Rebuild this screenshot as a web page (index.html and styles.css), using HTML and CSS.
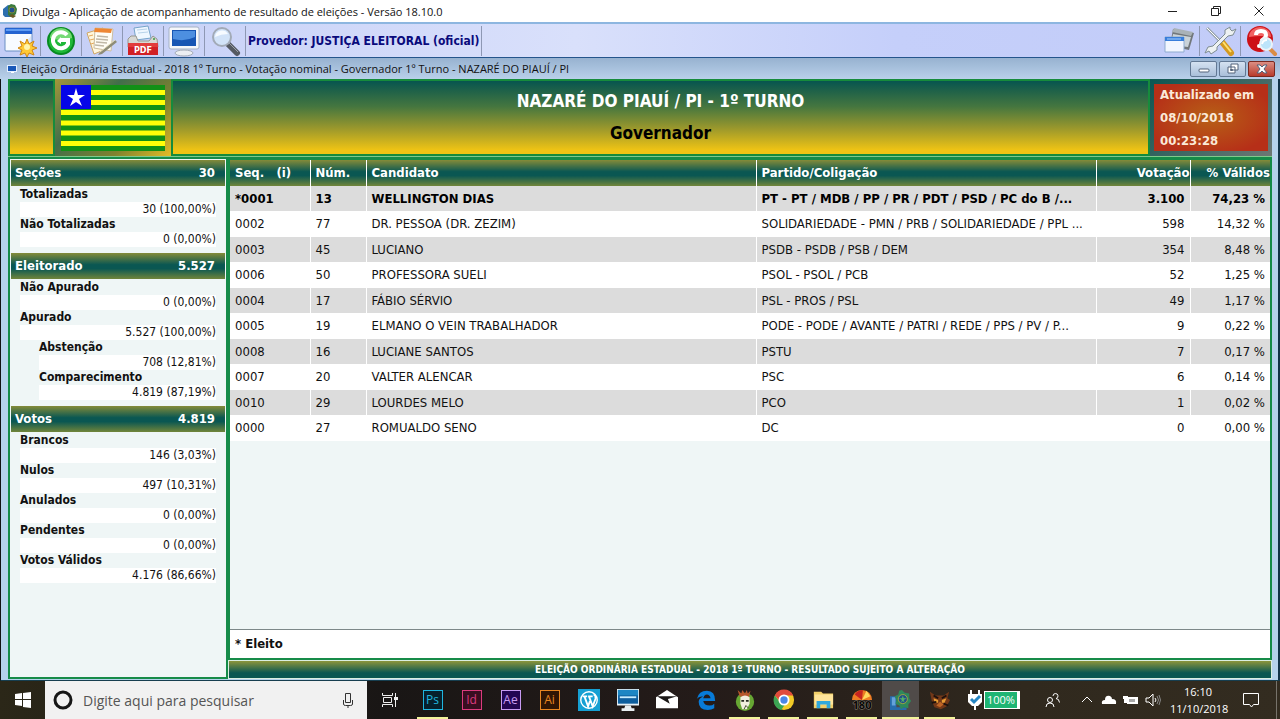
FILE: index.html
```
<!DOCTYPE html>
<html lang="pt-BR">
<head>
    <meta charset="UTF-8">
    <meta name="viewport" content="width=device-width, initial-scale=1.0">
    <title>Divulga - Aplicação de acompanhamento de resultado de eleições</title>
    <link rel="stylesheet" href="styles.css">
</head>
<body>
    <header class="titlebar">
        <svg class="app-icon" viewBox="0 0 16 16"><path d="M1 6l5-4 3 1v11H3L1 12z" fill="#2d6fae"/><path d="M6 3l3-2 4 1 2 4-1 5-4 3-4-2z" fill="#3a7a3e"/><circle cx="10" cy="7" r="3" fill="#23508e" stroke="#7d8a3a"/><path d="M7 13l3-2 4 2-3 2z" fill="#6a5a22"/></svg>
        <span>Divulga - Aplicação de acompanhamento de resultado de eleições - Versão 18.10.0</span>
        <div class="window-controls">
            <button aria-label="Minimizar"><svg viewBox="0 0 12 12"><path d="M1 6.500h9"/></svg></button>
            <button aria-label="Restaurar"><svg viewBox="0 0 12 12"><path d="M1.500 3.500h7v7h-7zM3.500 3.500v-2h7v7h-2"/></svg></button>
            <button aria-label="Fechar"><svg viewBox="0 0 12 12"><path d="M1.500 1.500l9 9M10.500 1.500l-9 9"/></svg></button>
        </div>
    </header>

    <nav class="toolbar">
        <button class="tool" aria-label="Nova janela">
            <svg viewBox="0 0 34 32"><rect x="2" y="3" width="27" height="23" rx="1" fill="#f8fbff" stroke="#6b8fc4"/><path d="M2 3h27v6H2z" fill="#2463d0"/><path d="M3 4h25v2H3z" fill="#5e9bf2"/><path d="M16 25l12-14v14z" fill="#dce7f6"/><path d="M24 14l2 5 5-3-2 5 5 2-5 2 2 5-5-2-2 4-2-4-5 2 2-5-4-2 4-2-2-5 5 3z" fill="#ffc935" stroke="#d08714"/><circle cx="24" cy="22" r="3" fill="#fff5ad"/></svg>
        </button>
        <button class="tool" aria-label="Atualizar">
            <svg viewBox="0 0 34 32"><circle cx="17" cy="16" r="14" fill="#078b20"/><circle cx="17" cy="16" r="12" fill="#1fb838"/><path d="M6 13a11 10 0 0 1 22 0q-10 4-22 0" fill="#75da75"/><path d="M23 10a8 8 0 1 0 1 9v-4h-7" fill="none" stroke="#fff" stroke-width="4"/><path d="M17 12v7l-4-3z" fill="#fff"/></svg>
        </button>
        <button class="tool" aria-label="Relatórios">
            <svg viewBox="0 0 34 32"><path d="M2 8l16-5 6 20-15 6z" fill="#fff7dd" stroke="#d0a765"/><path d="M10 3l18 1-2 22-17-3z" fill="#fffdf5" stroke="#ccbda0"/><path d="M10 3l17 1-1 4-17-1z" fill="#ee8734"/><path d="M12 11l11 1M11 14l12 1M11 17l11 1M10 20l9 1" stroke="#c0b8a7" stroke-width="1.500"/><path d="M4 11l4-1M5 15l4-1M6 19l3-1" stroke="#e5a85b"/><path d="M30 15l2 2-15 12-4 1 2-3z" fill="#8e8c77"/><path d="M30 15l-15 12" stroke="#e7dfbd"/></svg>
        </button>
        <button class="tool" aria-label="Gerar PDF">
            <svg viewBox="0 0 34 32"><path d="M8 3l14-2 3 12-15 2z" fill="#eff7ff" stroke="#76a4ca"/><path d="M11 5l10-1M12 8l10-1" stroke="#b8d3ea"/><path d="M5 11h5l2 5h11l4-5 4 3 1 8H2v-8z" fill="#d8d8d4" stroke="#98988f"/><circle cx="28" cy="14" r="1" fill="#389b43"/><path d="M2 18h30v12H2z" fill="#d12025"/><path d="M2 18h30v4H2z" fill="#e23c3c"/><text x="17" y="28" text-anchor="middle" class="pdf-text">PDF</text></svg>
        </button>
        <button class="tool" aria-label="Telão">
            <svg viewBox="0 0 34 32"><path d="M13 23h8l3 5H10z" fill="#d6dce5"/><ellipse cx="17" cy="28" rx="9" ry="3" fill="#eceff3" stroke="#a5adb8"/><rect x="2" y="2" width="30" height="22" rx="2" fill="#f5f7fa" stroke="#a5b2c5"/><path d="M5 5h24v16H5z" fill="#1756b3"/><path d="M6 6h22v6q-10 5-22 2z" fill="#4d8fe0"/></svg>
        </button>
        <button class="tool" aria-label="Pesquisar">
            <svg viewBox="0 0 34 32"><path d="M20 19l9 9" stroke="#555a62" stroke-width="6" stroke-linecap="round"/><path d="M21 18l9 9" stroke="#9ba0a8"/><circle cx="14" cy="12" r="9" fill="#d2e3f8" stroke="#a2aab7" stroke-width="2"/><path d="M7 12a7 7 0 0 1 13-3q-7 0-13 3" fill="#f7fbff"/></svg>
        </button>
        <span class="provider">Provedor: JUSTIÇA ELEITORAL (oficial)</span>
        <div class="toolbar-end">
            <button class="tool" aria-label="Janelas">
                <svg viewBox="0 0 34 32"><path d="M11 4l21 4-5 17-19-4z" fill="#71777b"/><path d="M12 3l19 4-2 4-19-4z" fill="#a9b2b7"/><path d="M11 9l18 3-3 10-17-2z" fill="#cad3d8"/><path d="M3 12h19v15H3z" fill="#f1f6ff" stroke="#8eabcf"/><path d="M3 12h19v4H3z" fill="#387edb"/><path d="M5 14h14" stroke="#a8d1ff"/></svg>
            </button>
            <button class="tool" aria-label="Configurações">
                <svg viewBox="0 0 34 32"><path d="M4 3l14 14" stroke="#98a4ac" stroke-width="3"/><path d="M4 3l14 14" stroke="#fff"/><path d="M19 17l9 11" stroke="#d49920" stroke-width="6" stroke-linecap="round"/><path d="M20 17l8 10" stroke="#ffe16e" stroke-width="2"/><path d="M27 2l-5 3v4L10 21l-5 1-3 6 4-2 2 3 6-4v-3l11-11 5-1 3-6-4 2-2-2z" fill="#edf1f2" stroke="#7e8c91"/></svg>
            </button>
            <button class="tool" aria-label="Ajuda">
                <svg viewBox="0 0 34 32"><circle cx="16" cy="14" r="13" fill="#cd1016"/><path d="M5 12a11 10 0 0 1 22 0q-10-2-22 0" fill="#f16262"/><path d="M12 10q0-4 5-4t5 4q0 3-5 6" fill="none" stroke="#fff" stroke-width="4"/><circle cx="15" cy="21" r="2" fill="#fff"/><path d="M26 24l5 5" stroke="#da8c45" stroke-width="4" stroke-linecap="round"/><circle cx="22" cy="19" r="6" fill="#bce4fa" stroke="#e9f3f9" stroke-width="2"/><path d="M18 19q1-4 5-4" fill="none" stroke="#fff" stroke-width="2"/></svg>
            </button>
        </div>
    </nav>

    <div class="child-title">
        <svg class="child-icon" viewBox="0 0 10 10"><path d="M0 1h10v7H0z" fill="#e4efff"/><path d="M1 2h8v5H1z" fill="#1958b8"/><path d="M4 8h3v1H4z" fill="#fff"/></svg>
        <span>Eleição Ordinária Estadual - 2018 1º Turno - Votação nominal - Governador 1º Turno - NAZARÉ DO PIAUÍ / PI</span>
        <div class="child-controls">
            <button aria-label="Minimizar consulta"><svg viewBox="0 0 14 12"><rect x="2" y="6" width="10" height="3" rx="1"/></svg></button>
            <button aria-label="Restaurar consulta"><svg viewBox="0 0 14 12"><path d="M5 1h7v6H5zM2 4h7v6H2zM4.500 6.500h2v1h-2z"/></svg></button>
            <button class="child-close" aria-label="Fechar consulta"><svg viewBox="0 0 14 12"><path d="M2 2h3l2 2 2-2h3L9 6l3 4H9L7 8l-2 2H2l3-4z"/></svg></button>
        </div>
    </div>

    <main class="desktop">
        <section class="banner">
            <div class="banner-block"></div>
            <div class="flag-frame">
                <svg class="flag" viewBox="0 0 104 66" preserveAspectRatio="none" role="img" aria-label="Bandeira do Piauí">
                    <path d="M0 0h104v66H0z" fill="#129016"/>
                    <path d="M0 7.500h104M0 17.500h104M0 27.500h104M0 38h104M0 48h104M0 58.500h104" stroke="#ffff08" stroke-width="5"/>
                    <path d="M0 0h30v24H0z" fill="#0505e8"/>
                    <path d="M15 3l2 7h7l-6 4 3 7-6-4-6 4 3-7-6-4h7z" fill="#fff"/>
                </svg>
            </div>
            <div class="banner-title">
                <h1>NAZARÉ DO PIAUÍ / PI - 1º TURNO</h1>
                <h2>Governador</h2>
            </div>
            <div class="updated">
                <div class="updated-box">
                    <div>Atualizado em</div>
                    <div>08/10/2018</div>
                    <div>00:23:28</div>
                </div>
            </div>
        </section>

        <div class="content">
            <aside class="sidebar">
                <section class="group">
                    <h3><span>Seções</span><span>30</span></h3>
                    <dl>
                        <dt>Totalizadas</dt><dd>30 (100,00%)</dd>
                        <dt>Não Totalizadas</dt><dd>0 (0,00%)</dd>
                    </dl>
                </section>
                <section class="group">
                    <h3><span>Eleitorado</span><span>5.527</span></h3>
                    <dl>
                        <dt>Não Apurado</dt><dd>0 (0,00%)</dd>
                        <dt>Apurado</dt><dd>5.527 (100,00%)</dd>
                        <dt class="sub">Abstenção</dt><dd class="sub">708 (12,81%)</dd>
                        <dt class="sub">Comparecimento</dt><dd class="sub">4.819 (87,19%)</dd>
                    </dl>
                </section>
                <section class="group">
                    <h3><span>Votos</span><span>4.819</span></h3>
                    <dl>
                        <dt>Brancos</dt><dd>146 (3,03%)</dd>
                        <dt>Nulos</dt><dd>497 (10,31%)</dd>
                        <dt>Anulados</dt><dd>0 (0,00%)</dd>
                        <dt>Pendentes</dt><dd>0 (0,00%)</dd>
                        <dt>Votos Válidos</dt><dd>4.176 (86,66%)</dd>
                    </dl>
                </section>
            </aside>

            <section class="results">
                <div class="results-panel">
                    <table>
                        <colgroup>
                            <col class="col-seq"><col class="col-num"><col><col class="col-party"><col class="col-votes"><col class="col-valid">
                        </colgroup>
                        <thead>
                            <tr><th>Seq. &nbsp; (i)</th><th>Núm.</th><th>Candidato</th><th>Partido/Coligação</th><th class="right">Votação</th><th class="right">% Válidos</th></tr>
                        </thead>
                        <tbody>
                            <tr class="elected"><td>*0001</td><td>13</td><td>WELLINGTON DIAS</td><td>PT - PT / MDB / PP / PR / PDT / PSD / PC do B /...</td><td class="right">3.100</td><td class="right">74,23 %</td></tr>
                            <tr><td>0002</td><td>77</td><td>DR. PESSOA (DR. ZEZIM)</td><td>SOLIDARIEDADE - PMN / PRB / SOLIDARIEDADE / PPL ...</td><td class="right">598</td><td class="right">14,32 %</td></tr>
                            <tr><td>0003</td><td>45</td><td>LUCIANO</td><td>PSDB - PSDB / PSB / DEM</td><td class="right">354</td><td class="right">8,48 %</td></tr>
                            <tr><td>0006</td><td>50</td><td>PROFESSORA SUELI</td><td>PSOL - PSOL / PCB</td><td class="right">52</td><td class="right">1,25 %</td></tr>
                            <tr><td>0004</td><td>17</td><td>FÁBIO SÉRVIO</td><td>PSL - PROS / PSL</td><td class="right">49</td><td class="right">1,17 %</td></tr>
                            <tr><td>0005</td><td>19</td><td>ELMANO O VEIN TRABALHADOR</td><td>PODE - PODE / AVANTE / PATRI / REDE / PPS / PV / P...</td><td class="right">9</td><td class="right">0,22 %</td></tr>
                            <tr><td>0008</td><td>16</td><td>LUCIANE SANTOS</td><td>PSTU</td><td class="right">7</td><td class="right">0,17 %</td></tr>
                            <tr><td>0007</td><td>20</td><td>VALTER ALENCAR</td><td>PSC</td><td class="right">6</td><td class="right">0,14 %</td></tr>
                            <tr><td>0010</td><td>29</td><td>LOURDES MELO</td><td>PCO</td><td class="right">1</td><td class="right">0,02 %</td></tr>
                            <tr><td>0000</td><td>27</td><td>ROMUALDO SENO</td><td>DC</td><td class="right">0</td><td class="right">0,00 %</td></tr>
                        </tbody>
                    </table>
                    <div class="legend">* Eleito</div>
                </div>
                <div class="notice">ELEIÇÃO ORDINÁRIA ESTADUAL - 2018 1º TURNO - RESULTADO SUJEITO A ALTERAÇÃO</div>
            </section>
        </div>
    </main>

    <footer class="taskbar">
        <button class="start" aria-label="Iniciar"><svg viewBox="0 0 16 16"><path d="M0 2l7-1v6H0zM8 1l8-1v7H8zM0 8h7v6l-7-1zM8 8h8v8l-8-1z" fill="#fff"/></svg></button>
        <label class="search">
            <svg class="cortana" viewBox="0 0 20 20"><circle cx="10" cy="10" r="8" fill="none" stroke="#161616" stroke-width="3"/></svg>
            <input type="text" placeholder="Digite aqui para pesquisar" aria-label="Pesquisar">
            <svg class="mic" viewBox="0 0 12 16"><path d="M3.500 1.500h5v9h-5zM1.500 8v4q0 1.500 2 1.500h5q2 0 2-1.500V8M6 13.500V16" fill="none" stroke="#333"/></svg>
        </label>
        <button class="task-view" aria-label="Visão de tarefas"><svg viewBox="0 0 16 16"><path d="M.500 1v2.500h10V1M.500 15v-2.500h10V15M1.500 5.500h8v5h-8zM13.500 1v14" fill="none" stroke="#eee"/><path d="M12 5h4v3h-4z" fill="#eee"/></svg></button>
        <nav class="apps">
            <button class="open adobe ps" aria-label="Photoshop"><span>Ps</span></button>
            <button class="adobe id" aria-label="InDesign"><span>Id</span></button>
            <button class="adobe ae" aria-label="After Effects"><span>Ae</span></button>
            <button class="adobe ai" aria-label="Illustrator"><span>Ai</span></button>
            <button aria-label="WordPress"><svg viewBox="0 0 24 24"><path d="M0 0h24v24H0z" fill="#16a0d3"/><circle cx="12" cy="12" r="9" fill="none" stroke="#fff" stroke-width="1.500"/><path d="M5 8h5M7 8l4 11 2-6M11 8h5M12 8l4 11 3-8q1-4-2-5" fill="none" stroke="#fff" stroke-width="2"/></svg></button>
            <button aria-label="Monitor"><svg viewBox="0 0 24 24"><path d="M0 0h24v18H0z" fill="#e8f2f8"/><path d="M1 1h22v15H1z" fill="#0d5e9e"/><path d="M1 1h22v6H1z" fill="#1c86c4"/><path d="M3 9h18" stroke="#c6edff" stroke-width="2"/><path d="M9 18h6l1 3h3v3H5v-3h3z" fill="#e9eef1"/></svg></button>
            <button aria-label="Email"><svg viewBox="0 0 24 24"><path d="M0 9l12-8 12 8v12H0z" fill="#fff"/><path d="M1 8h22l-10 3 2 5z" fill="#1b1716"/></svg></button>
            <button aria-label="Edge"><svg viewBox="0 0 24 24"><path d="M2 11Q4 2 13 2q9 0 9 11H9q1 5 7 5 3 0 5-2v5q-3 2-7 2-10 0-10-9 0-4 6-6-6 0-8 3m7-1h8q-1-4-4-4t-4 4" fill="#087bd8"/></svg></button>
            <button class="open" aria-label="DAEMON"><svg viewBox="0 0 24 24"><circle cx="12" cy="14" r="10" fill="#67a633"/><path d="M6 8l-2-7 4 4 1-4 3 4 2-4 1 4 3-3-2 8z" fill="#b7562b"/><path d="M7 9q5-4 10 0v7l-3 6H9l-2-6z" fill="#f2eedf"/><path d="M8 12h3v2H8zM13 12h3v2h-3z" fill="#262820"/><path d="M11 22l2-4 3 3" fill="none" stroke="#393f2d"/></svg></button>
            <button class="open" aria-label="Chrome"><svg viewBox="0 0 24 24"><circle cx="12" cy="12" r="11" fill="#f2ca26"/><path d="M2 7a11 11 0 0 1 20 0H12l-4 7z" fill="#e04b3c"/><path d="M2 7l6 8 5 2-4 6A11 11 0 0 1 2 7" fill="#3ba553"/><circle cx="12" cy="12" r="5" fill="#4a86e6" stroke="#fff" stroke-width="2"/></svg></button>
            <button class="open" aria-label="Explorador de arquivos"><svg viewBox="0 0 24 24"><path d="M2 3h8l2 2h11v16H2z" fill="#f2cf69"/><path d="M3 6h20v11H3z" fill="#ffe49a"/><path d="M5 13h15v8h-4v-4H9v4H5z" fill="#2fa8dc"/></svg></button>
            <button class="open" aria-label="Eleições 180"><svg viewBox="0 0 24 24"><path d="M1 12a11 11 0 0 1 22 0z" fill="#ed7c23"/><path d="M4 6l8 6 1-11q-6 0-9 5" fill="#c52320"/><path d="M12 12l5-10 4 6z" fill="#ffd65c"/><text x="12" y="22" text-anchor="middle" class="icon-180">180</text></svg></button>
            <button class="open active" aria-label="Divulga"><svg viewBox="0 0 24 24"><path d="M0 8h7v12h11v3H0z" fill="#276cad"/><path d="M2 9h4v9H2z" fill="#65a2da"/><path d="M13 1l3 3 5 1v5l2 3-3 4v4l-5-1-3 2-2-4-4-2 1-4-2-4 4-2 1-4z" fill="#2f895a"/><circle cx="14" cy="11" r="5" fill="#22518a" stroke="#a5a53f" stroke-width="1"/><path d="M14 7l1 3h3l-3 2 1 3-2-2-2 2 1-3-3-2h3z" fill="#55b168"/></svg></button>
            <button class="open" aria-label="Gato"><svg viewBox="0 0 24 24"><path d="M1 3l6 4h9l6-4-2 7 3 2-4 7-6 3-7-2-3-7z" fill="#733818"/><path d="M5 10l5 2v3H6zM14 12l5-2-2 5h-3z" fill="#e79b32"/><path d="M8 18l4-4 4 3-4 3z" fill="#c06525"/><path d="M5 7l5 3M19 7l-5 3M3 15l5-1M16 16l5 2" stroke="#1b100c" stroke-width="2"/></svg></button>
        </nav>
        <div class="power">
            <svg class="plug" viewBox="0 0 14 20"><path d="M2 0h2v4h6V0h2v4h2v8l-4 4H8v4H6v-4H4l-4-4V4h2z" fill="#fff"/><path d="M3 9l3 3 6-6" fill="none" stroke="#2586c4" stroke-width="3"/></svg>
            <span class="power-level">100%</span>
        </div>
        <div class="tray">
            <svg viewBox="0 0 16 16"><circle cx="5" cy="8" r="2.500"/><path d="M1 15q0-4 4-4t4 4M8 4a2.500 2.500 0 1 1 3 2.500q3 0 3.500 4"/></svg>
            <svg viewBox="0 0 16 16"><path d="M3 10l5-5 5 5"/></svg>
            <svg class="solid" viewBox="0 0 16 16"><path d="M1 12q-1-4 3-4 0-5 5-4 2 1 2 3 5 0 4 5z"/></svg>
            <svg class="solid" viewBox="0 0 16 16"><path d="M4 5h11v7H4z"/><path d="M6 7h6v3H6z" fill="#aaa"/><path d="M0 4h5v3H4v4H1V7H0z"/></svg>
            <svg viewBox="0 0 16 16"><path d="M1 6h3l4-4v12l-4-4H1zM10 6q2 2 0 4"/><path d="M12 4q3 4 0 8M14 3q3 5 0 10" stroke="#888"/></svg>
        </div>
        <div class="clock"><div>16:10</div><div>11/10/2018</div></div>
        <button class="notifications" aria-label="Notificações"><svg viewBox="0 0 16 16"><path d="M.500 1.500h15v11h-5l-2 2.500-2-2.500h-6z" fill="none" stroke="#fff"/></svg></button>
    </footer>
</body>
</html>
```
FILE: styles.css
```
* {
    box-sizing: border-box;
}
body {
    margin: 0;
    min-height: 100vh;
    display: flex;
    flex-direction: column;
    font-family: "DejaVu Sans Condensed", "DejaVu Sans", Tahoma, sans-serif;
    font-size: 12px;
    color: #111;
    background-color: #b7cfe8;
}
h1, h2, h3, dl, dd {
    margin: 0;
}
button {
    padding: 0;
    border: none;
    background: none;
    font: inherit;
    display: flex;
    align-items: center;
    justify-content: center;
}
svg {
    display: block;
    flex: none;
}

/* janela principal */
.titlebar {
    display: flex;
    align-items: center;
    height: 22px;
    padding-left: 2px;
    gap: 4px;
    background-color: #fff;
    font-family: "Open Sans", sans-serif;
    font-size: 11px;
}
.app-icon {
    width: 16px;
    height: 16px;
}
.window-controls {
    display: flex;
    margin-left: auto;
}
.window-controls button {
    width: 43px;
    height: 20px;
}
.window-controls svg {
    width: 12px;
    height: 12px;
    fill: none;
    stroke: #222;
}
.toolbar {
    display: flex;
    align-items: center;
    height: 36px;
    background: linear-gradient(to right, #c3cdf6, #d9e0fb 45%, #c5cffa 70%, #c2ccf8);
    border-top: 2px solid #8db6e0;
    border-bottom: 1px solid #24558c;
}
.tool {
    width: 41px;
    height: 30px;
    border-right: 1px solid #8e98b4;
}
.tool svg {
    width: 34px;
    height: 32px;
}
.provider {
    padding: 0 2px;
    line-height: 30px;
    border-right: 1px solid #8e98b4;
    font-weight: bold;
    color: #0a0a7c;
}
.toolbar-end {
    display: flex;
    margin-left: auto;
}
.toolbar-end .tool:last-child {
    width: 39px;
    border-right: none;
}

/* janela da consulta */
.child-title {
    display: flex;
    align-items: center;
    gap: 4px;
    height: 21px;
    padding: 0 5px 0 7px;
    background: linear-gradient(#97b2d0, #b9d0ea);
    font-family: "Open Sans", sans-serif;
    font-size: 11px;
}
.child-icon {
    width: 10px;
    height: 10px;
}
.child-controls {
    display: flex;
    gap: 2px;
    margin-left: auto;
}
.child-controls button {
    width: 27px;
    height: 16px;
    border: 1px solid #627894;
    border-radius: 2px;
    background: linear-gradient(#d5e2f1, #a9bfd9);
}
.child-controls svg {
    width: 14px;
    height: 12px;
    fill: #fff;
    stroke: #53627a;
}
.child-controls .child-close {
    background: linear-gradient(#dc8e83, #b93b2c);
    border-color: #792820;
}
.desktop {
    flex: 1;
    display: flex;
    flex-direction: column;
    padding: 0 6px 1px 7px;
    border-left: 1px solid #111;
    border-right: 2px solid #123348;
    border-bottom: 1px solid #163e4f;
    background-color: #b5d2ec;
}
.banner {
    display: flex;
    height: 78px;
    border-bottom: 1px solid #7fc98b;
    background-color: #168b49;
}
.banner-block, .banner-title {
    border: 2px solid #168b3c;
    background: linear-gradient(#07554f, #45763f 35%, #9b982c 65%, #f0c414 95%);
}
.banner-block {
    width: 47px;
}
.flag-frame {
    display: flex;
    align-items: center;
    justify-content: center;
    width: 116px;
    background: linear-gradient(135deg, #a5963a, #416e4b 35%, #80822f 70%, #e4bc25);
}
.flag {
    width: 104px;
    height: 66px;
}
.banner-title {
    flex: 1;
    text-align: center;
    padding-top: 4px;
}
h1, h2 {
    font-size: 17px;
    line-height: 32px;
}
h1 {
    color: #fff;
}
h2 {
    color: #000;
}
.updated {
    width: 122px;
    padding: 5px 4px;
    background: linear-gradient(135deg, #0c5652, #6d7774);
}
.updated-box {
    display: flex;
    flex-direction: column;
    justify-content: center;
    height: 100%;
    padding-left: 6px;
    background: radial-gradient(#b76016, #b62f18 80%);
    color: #fbe9d8;
    font-size: 13px;
    font-weight: bold;
    line-height: 23px;
}
.content {
    flex: 1;
    display: flex;
}

/* totais */
.sidebar {
    width: 220px;
    padding: 1px;
    border: 2px solid #168b49;
    background-color: #eff6f6;
}
.group {
    padding-bottom: 6px;
}
.group h3 {
    display: flex;
    justify-content: space-between;
    padding: 0 10px 0 4px;
    margin-bottom: 1px;
    font-size: 13px;
    line-height: 26px;
    color: #fff;
    background: linear-gradient(#848b39, #0a5752 45%, #0a5752 60%, #71853a);
}
.group dl {
    padding: 0 9px;
    line-height: 15px;
}
.group dt {
    font-weight: bold;
}
.group dd {
    text-align: right;
    background-color: #fff;
}
.group .sub {
    margin-left: 19px;
}

/* candidatos */
.results {
    flex: 1;
    display: flex;
    flex-direction: column;
    background-color: #eff6f6;
}
.results-panel {
    flex: 1;
    display: flex;
    flex-direction: column;
    border: 2px solid #168b49;
    border-top-width: 3px;
}
table {
    width: 100%;
    table-layout: fixed;
    border-collapse: collapse;
    font-size: 13px;
}
.col-seq {
    width: 80px;
}
.col-num {
    width: 56px;
}
.col-party {
    width: 340px;
}
.col-votes {
    width: 94px;
}
.col-valid {
    width: 80px;
}
th, td {
    padding: 0 5px;
    text-align: left;
    line-height: 25px;
    white-space: nowrap;
    overflow: hidden;
    border-right: 1px solid #fff;
}
th {
    line-height: 26px;
    color: #fff;
    background: linear-gradient(#848b39, #0a5752 45%, #0a5752 60%, #71853a);
}
.right {
    text-align: right;
}
th.right {
    padding-right: 0;
}
td:last-child, th:last-child {
    border-right: none;
}
tbody tr:nth-child(odd) {
    background-color: #dcdcdc;
}
tbody tr:nth-child(even) {
    background-color: #fff;
}
tbody tr:nth-child(even) td {
    line-height: 26px;
}
.elected {
    font-weight: bold;
    color: #000;
}
.legend {
    margin-top: auto;
    padding-left: 5px;
    line-height: 28px;
    font-size: 13px;
    font-weight: bold;
    background-color: #fff;
    border-top: 1px solid #7d8889;
}
.notice {
    line-height: 17px;
    text-align: center;
    font-size: 10px;
    font-weight: bold;
    color: #fff;
    background: linear-gradient(#8b943a, #0a5752 70%);
    border: 1px solid #d9eee0;
}

/* barra de tarefas */
.taskbar {
    display: flex;
    align-items: stretch;
    height: 38px;
    padding-right: 3px;
    color: #fff;
    background: linear-gradient(to right, #2b2718, #191615 30%, #241b19 55%, #30291e 80%, #332c20);
    font-family: "Open Sans", sans-serif;
}
.start {
    width: 45px;
}
.start svg, .task-view svg {
    width: 16px;
    height: 16px;
}
.search {
    display: flex;
    align-items: center;
    width: 322px;
    padding: 0 13px 0 8px;
    gap: 10px;
    background-color: #f1f1f1;
}
.search input {
    flex: 1;
    min-width: 0;
    padding: 0;
    border: none;
    outline: none;
    background: none;
    font-family: inherit;
    font-size: 14px;
}
.search input::placeholder {
    color: #555;
}
.cortana {
    width: 20px;
    height: 20px;
}
.mic {
    width: 12px;
    height: 16px;
}
.task-view {
    width: 46px;
}
.apps {
    display: flex;
}
.apps button {
    width: 39px;
    border: solid transparent;
    border-width: 2px 0;
}
.apps svg {
    width: 22px;
    height: 22px;
}
.apps .open {
    width: 31px;
    margin: 0 4px;
    border-bottom-color: #f2f39a;
}
.apps .active {
    width: 37px;
    margin: 0 1px;
    background-color: #504b49;
}
.adobe span {
    width: 20px;
    line-height: 18px;
    border: 1px solid;
    font-size: 12px;
}
.ps span {
    color: #20b5df;
    background-color: #06202c;
}
.id span {
    color: #dc3b7e;
    background-color: #390d20;
}
.ae span {
    color: #c79bf2;
    background-color: #230653;
}
.ai span {
    color: #e88620;
    background-color: #301604;
}
.power {
    display: flex;
    align-items: center;
    gap: 2px;
    padding-left: 9px;
}
.plug {
    width: 14px;
    height: 20px;
}
.power-level {
    padding: 0 2px;
    line-height: 16px;
    font-size: 11px;
    border: 1px solid #fff;
    border-right-width: 3px;
    background-color: #1fb573;
}
.tray {
    flex: 1;
    display: flex;
    align-items: center;
    justify-content: flex-end;
    gap: 6px;
    padding-right: 9px;
}
.tray svg {
    width: 16px;
    height: 16px;
    fill: none;
    stroke: #fff;
}
.tray svg:first-child {
    margin-right: 12px;
}
.tray .solid {
    fill: #fff;
    stroke: none;
}
.clock {
    width: 56px;
    padding-top: 2px;
    text-align: center;
    font-size: 11px;
    line-height: 17px;
}
.notifications {
    width: 51px;
    border-right: 1px solid #77736b;
}
.notifications svg {
    width: 16px;
    height: 16px;
}
.pdf-text {
    font-size: 9px;
    font-weight: bold;
    fill: #fff;
}
.icon-180 {
    font-size: 12px;
    font-weight: bold;
    fill: #080706;
    stroke: #8d8378;
    stroke-width: 1px;
    paint-order: stroke;
}
```
